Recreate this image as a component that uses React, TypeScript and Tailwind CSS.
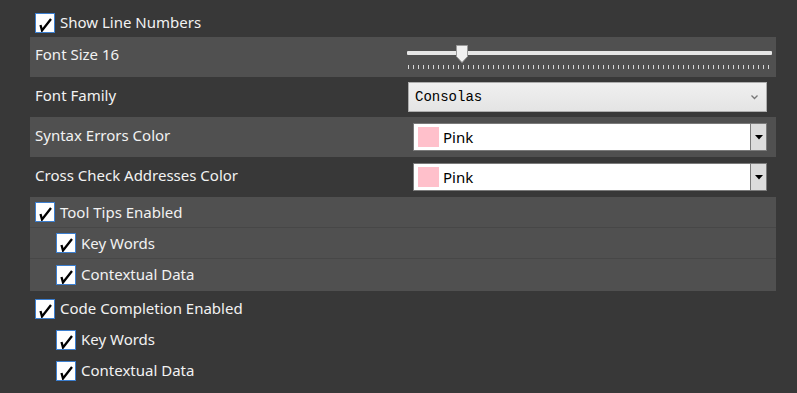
import React from 'react';

const CheckBox = () => (
  <span className="flex h-[20px] w-[20px] shrink-0 items-center justify-center border border-[#3c7fd0] bg-white">
    <svg width="18" height="18" viewBox="0 0 18 18">
      <polyline points="4.5,11 6,16.5 15,5" fill="none" stroke="#000" strokeWidth="2.3" strokeLinejoin="miter" />
    </svg>
  </span>
);

const CheckRow = ({ label, indent = false, tall = true, className = '' }: { label: string; indent?: boolean; tall?: boolean; className?: string }) => (
  <div className={`flex items-center gap-[5px] ${tall ? 'h-[31px]' : 'h-[29px]'} ${indent ? 'pl-[26px]' : 'pl-[5px]'} ${className}`}>
    <CheckBox />
    <span>{label}</span>
  </div>
);

const Slider = () => {
  const ticks = Array.from({ length: 73 }, (_, i) => i * 5 + 1);
  return (
    <div className="relative h-[40px] w-[365px]">
      <div className="absolute left-0 right-0 top-[14px] h-[4px] rounded-[1px] bg-[#e6e6e6]" />
      <svg className="absolute left-[49px] top-[8px]" width="12" height="18" viewBox="0 0 12 18">
        <path d="M0.5 0.5 H11.5 V11.5 L6 17.5 L0.5 11.5 Z" fill="#f0f0f0" stroke="#9a9a9a" />
      </svg>
      <svg className="absolute left-0 top-[28px]" width="365" height="5" viewBox="0 0 365 5">
        {ticks.map((x) => (
          <rect key={x} x={x} y={0} width={1} height={4} fill="#d8d8d8" />
        ))}
      </svg>
    </div>
  );
};

const ColorCombo = () => (
  <div className="flex h-[28px] w-[354px] border border-[#7a7a7a] bg-white">
    <div className="flex flex-1 items-center gap-[4px] pl-[4px] text-black">
      <span className="h-[20px] w-[21px] bg-[#ffc0cb]" />
      <span>Pink</span>
    </div>
    <div className="flex w-[16px] items-center justify-center border-l border-[#7a7a7a] bg-[#dcdcdc]">
      <svg width="8" height="5" viewBox="0 0 8 5">
        <path d="M0 0 H8 L4 4.5 Z" fill="#000" />
      </svg>
    </div>
  </div>
);

export default function App() {
  return (
    <div
      className="min-h-[393px] w-[797px] bg-[#383838] pl-[30px] pt-[8px] text-[15px] text-[#f2f2f2]"
      style={{ fontFamily: '"Segoe UI", "Noto Sans", sans-serif' }}
    >
      <div className="w-[746px]">
        <CheckRow label="Show Line Numbers" tall={false} />

        <div className="flex h-[40px] items-center justify-between bg-[#505050] pl-[5px] pr-[4px]">
          <span className="pb-[5px]">Font Size 16</span>
          <Slider />
        </div>

        <div className="flex h-[40px] items-center justify-between pl-[5px] pr-[9px]">
          <span className="pb-[4px]">Font Family</span>
          <div className="flex h-[30px] w-[359px] items-center justify-between border border-[#adadad] bg-gradient-to-b from-[#f0f0f0] to-[#e4e4e4] pl-[6px] pr-[8px] text-black">
            <span className="text-[14px]" style={{ fontFamily: '"Liberation Mono", monospace' }}>Consolas</span>
            <svg width="7" height="5" viewBox="0 0 7 5">
              <path d="M0.5 0.5 L3.5 3.5 L6.5 0.5" fill="none" stroke="#777" strokeWidth="1.3" />
            </svg>
          </div>
        </div>

        <div className="flex h-[40px] items-center justify-between bg-[#505050] pl-[5px] pr-[9px]">
          <span className="pb-[4px]">Syntax Errors Color</span>
          <ColorCombo />
        </div>

        <div className="flex h-[40px] items-center justify-between pl-[5px] pr-[9px]">
          <span className="pb-[4px]">Cross Check Addresses Color</span>
          <ColorCombo />
        </div>

        <div className="bg-[#505050] pb-[1px]">
          <CheckRow label="Tool Tips Enabled" className="border-b border-[#474747]" />
          <CheckRow label="Key Words" indent className="border-b border-[#474747]" />
          <CheckRow label="Contextual Data" indent />
        </div>

        <div className="pt-[2px]">
          <CheckRow label="Code Completion Enabled" />
          <CheckRow label="Key Words" indent />
          <CheckRow label="Contextual Data" indent />
        </div>
      </div>
    </div>
  );
}
